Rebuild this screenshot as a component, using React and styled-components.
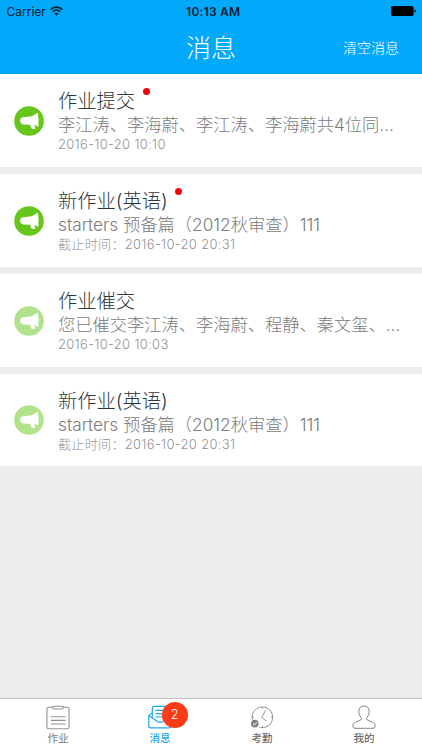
import React from 'react'
import styled, { createGlobalStyle } from 'styled-components'

const messages = [
  { id: 1, title: '作业提交', text: '李江涛、李海蔚、李江涛、李海蔚共4位同...', time: '2016-10-20 10:10', unread: true },
  { id: 2, title: '新作业(英语)', text: 'starters 预备篇（2012秋审查）111', label: '截止时间：', time: '2016-10-20 20:31', unread: true },
  { id: 3, title: '作业催交', text: '您已催交李江涛、李海蔚、程静、秦文玺、...', time: '2016-10-20 10:03', unread: false },
  { id: 4, title: '新作业(英语)', text: 'starters 预备篇（2012秋审查）111', label: '截止时间：', time: '2016-10-20 20:31', unread: false },
]

function WifiIcon() {
  return (
    <svg width="13" height="10" viewBox="0 0 13 10" fill="none" stroke="#06202f" strokeWidth="1.7">
      <path d="M0.7 3.6 C4 0.3 9 0.3 12.3 3.6" />
      <path d="M2.8 5.9 C5 3.8 8 3.8 10.2 5.9" />
      <path d="M4.4 7.5 Q6.5 5.8 8.6 7.5 L6.5 9.7 Z" fill="#06202f" stroke="none" />
    </svg>
  )
}

function BatteryIcon() {
  return (
    <svg width="25" height="10" viewBox="0 0 25 10" fill="#000">
      <rect x="0" y="0" width="22.5" height="10" rx="1.6" />
      <path d="M23.3 3.3 Q24.8 3.7 24.8 5 Q24.8 6.3 23.3 6.7 Z" />
    </svg>
  )
}

function HornIcon() {
  return (
    <svg width="30" height="30" viewBox="0 0 30 30">
      <circle cx="15" cy="15" r="14.8" fill="#66c61c" />
      <path
        d="M23.2 7 Q24 7 24.1 8 L24.3 12.2 Q25.5 13.5 24.4 15 L24.5 19.8 Q24.5 21 23.4 20.5 Q21.8 19.4 20.6 19.1 Q20.3 20.6 21.3 22 Q21.6 22.9 20.7 22.9 L18.4 22.7 Q17.4 22.5 17 21.4 L16.2 18.7 L9.4 18.5 Q6 17.6 6.1 14.5 Q6.3 11.6 9.2 11.2 L14.5 10.7 Q19.5 10.2 23.2 7 Z"
        fill="#fff"
      />
    </svg>
  )
}

function WorkIcon() {
  return (
    <svg width="24" height="25" viewBox="0 0 24 25" fill="none" stroke="#929292" strokeWidth="1.1">
      <path d="M6 2.2 H2.7 Q0.9 2.2 0.9 4 V22 Q0.9 23.8 2.7 23.8 H21.3 Q23.1 23.8 23.1 22 V4 Q23.1 2.2 21.3 2.2 H18" />
      <path d="M7 1.2 H17 Q18 1.2 17.6 2.2 Q17 4 15.5 4 H8.5 Q7 4 6.4 2.2 Q6 1.2 7 1.2 Z" />
      <path d="M5 11.8 H19.5 M5 15.4 H19.5 M5 19 H19.5" />
    </svg>
  )
}

function MailIcon() {
  return (
    <svg width="24" height="25" viewBox="0 0 24 25" fill="none" stroke="#20a5ee" strokeWidth="1.2">
      <path d="M4.3 8 L1.6 9.7 Q0.8 10.2 0.8 11.2 V20.8 Q0.8 22.9 3 22.9 H21 Q23.2 22.9 23.2 20.8 V11" />
      <path d="M1 10.8 L9.4 16.4 Q12 18 14.6 16.4 L23 10.8" />
      <path d="M4.3 12.6 V3.4 Q4.3 1.4 6.3 1.4 H18 Q19.8 1.4 19.8 3.4 V12.6" />
      <path d="M7.5 5.3 H17 M7.5 8.7 H17 M7.5 12 H17" />
    </svg>
  )
}

function ClockIcon() {
  return (
    <svg width="24" height="25" viewBox="0 0 24 25" fill="none" stroke="#858585" strokeWidth="0.9">
      <path d="M2.4 14.8 A10.3 10.3 0 1 1 9.3 22.1" />
      <path d="M15.4 5.6 L11.9 12.2 L16 16" />
      <path d="M12.4 2 V3.6 M22.7 12.2 H21 M12.4 22.5 V20.8 M2.1 12.2 H3.8" />
      <circle cx="4.8" cy="18.6" r="3.9" fill="#818181" stroke="none" />
      <path d="M2.8 18.5 L4.4 20 L7 17.2" stroke="#fff" strokeWidth="1" />
    </svg>
  )
}

function PersonIcon() {
  return (
    <svg width="24" height="25" viewBox="0 0 24 25" fill="none" stroke="#858585" strokeWidth="1">
      <path d="M12 1 C8.5 1 6.9 3.2 6.9 6.2 C6.9 8.6 7.3 10.5 8.8 12.2 C9.8 13.6 9.4 14.8 7.9 15.4 L3.4 17.1 Q0.8 18.2 0.8 21.2 Q0.8 23.3 3 23.3 H21 Q23.2 23.3 23.2 21.2 Q23.2 18.2 20.6 17.1 L16.1 15.4 C14.6 14.8 14.2 13.6 15.2 12.2 C16.7 10.5 17.1 8.6 17.1 6.2 C17.1 3.2 15.5 1 12 1 Z" />
    </svg>
  )
}

const tabs = [
  { name: '作业', Icon: WorkIcon, color: '#929292' },
  { name: '消息', Icon: MailIcon, color: '#20a5ee', count: 2 },
  { name: '考勤', Icon: ClockIcon, color: '#6f6f6f' },
  { name: '我的', Icon: PersonIcon, color: '#6f6f6f' },
]

function Message({ item }) {
  return (
    <Card>
      <Avatar $read={!item.unread}><HornIcon /></Avatar>
      <Content>
        <Title>{item.title}{item.unread && <Dot />}</Title>
        <Text>{item.text}</Text>
        <Time>{item.label && <TimeLabel>{item.label}</TimeLabel>}{item.time}</Time>
      </Content>
    </Card>
  )
}

function App() {
  return (
    <Screen>
      <GlobalStyle />
      <Header>
        <StatusBar>
          <Carrier>Carrier <WifiIcon /></Carrier>
          <Clock>10:13 AM</Clock>
          <Battery><BatteryIcon /></Battery>
        </StatusBar>
        <NavBar>
          <Heading>消息</Heading>
          <ClearButton>清空消息</ClearButton>
        </NavBar>
      </Header>
      <List>
        {messages.map(item => <Message key={item.id} item={item} />)}
      </List>
      <TabBar>
        {tabs.map(({ name, Icon, color, count }) => (
          <Tab key={name} $color={color}>
            <TabIcon>
              <Icon />
              {count && <Badge>{count}</Badge>}
            </TabIcon>
            <span>{name}</span>
          </Tab>
        ))}
      </TabBar>
    </Screen>
  )
}

const GlobalStyle = createGlobalStyle`
  * {
    box-sizing: border-box;
  }
  body {
    margin: 0;
    font-family: Inter, 'Noto Sans CJK SC', sans-serif;
  }
  button {
    font-family: inherit;
    border: none;
    background: none;
    padding: 0;
  }
  svg {
    display: block;
    flex-shrink: 0;
  }
`

const Screen = styled.div`
  width: 422px;
  height: 750px;
  display: flex;
  flex-direction: column;
  overflow: hidden;
  background: #ececec;
`

const Header = styled.header`
  height: 74px;
  background: #02a9fb;
`

const StatusBar = styled.div`
  height: 22px;
  display: grid;
  grid-template-columns: 1fr auto 1fr;
  align-items: center;
  padding: 0 6px 0 6.5px;
  font-size: 12px;
  color: #06202f;
`

const Carrier = styled.div`
  display: flex;
  align-items: center;
  gap: 4px;
`

const Clock = styled.div`
  font-weight: 600;
  letter-spacing: 0.25px;
  padding-left: 4px;
`

const Battery = styled.div`
  justify-self: end;
`

const NavBar = styled.div`
  height: 52px;
  display: grid;
  grid-template-columns: 1fr auto 1fr;
  align-items: center;
  padding: 0 23px;
  color: #fff;
`

const Heading = styled.h1`
  grid-column: 2;
  margin: 0;
  font-size: 25px;
  font-weight: 300;
  line-height: 52px;
`

const ClearButton = styled.button`
  justify-self: end;
  font-size: 14px;
  font-weight: 300;
  line-height: 52px;
  color: #fff;
`

const List = styled.main`
  flex: 1;
  display: flex;
  flex-direction: column;
  gap: 7px;
`

const Card = styled.article`
  height: 93px;
  display: flex;
  align-items: center;
  gap: 14px;
  padding: 0 14px;
  background: #fff;
  &:last-child {
    height: 92px;
  }
`

const Avatar = styled.div`
  opacity: ${({ $read }) => ($read ? 0.5 : 1)};
`

const Content = styled.div`
  display: flex;
  flex-direction: column;
  white-space: nowrap;
`

const Title = styled.h2`
  display: flex;
  gap: 7.5px;
  margin: 0;
  font-size: 19.3px;
  font-weight: 300;
  line-height: 26px;
  color: #2d383d;
`

const Dot = styled.i`
  width: 7px;
  height: 7px;
  border-radius: 50%;
  background: #f5000a;
`

const Text = styled.p`
  margin: 0;
  font-size: 17.25px;
  font-weight: 300;
  line-height: 22px;
  color: #7b7b7b;
`

const Time = styled.p`
  display: flex;
  margin: 0;
  font-size: 13px;
  font-weight: 300;
  line-height: 17px;
  letter-spacing: 0.3px;
  color: #939393;
`

const TimeLabel = styled.span`
  letter-spacing: 0.35px;
`

const TabBar = styled.nav`
  height: 52px;
  display: grid;
  grid-template-columns: repeat(4, 102px);
  justify-content: center;
  border-top: 1px solid #c4c4c4;
  background: #fff;
`

const Tab = styled.button`
  display: flex;
  flex-direction: column;
  align-items: center;
  padding-top: 6px;
  font-size: 10.5px;
  font-weight: 500;
  line-height: 17px;
  color: ${({ $color }) => $color};
`

const TabIcon = styled.div`
  position: relative;
`

const Badge = styled.span`
  position: absolute;
  top: -3px;
  left: 13.5px;
  width: 26px;
  height: 26px;
  border-radius: 50%;
  background: #fb3c16;
  color: #fff;
  font-size: 12.5px;
  font-weight: 300;
  line-height: 26px;
  text-align: center;
`

export default App
